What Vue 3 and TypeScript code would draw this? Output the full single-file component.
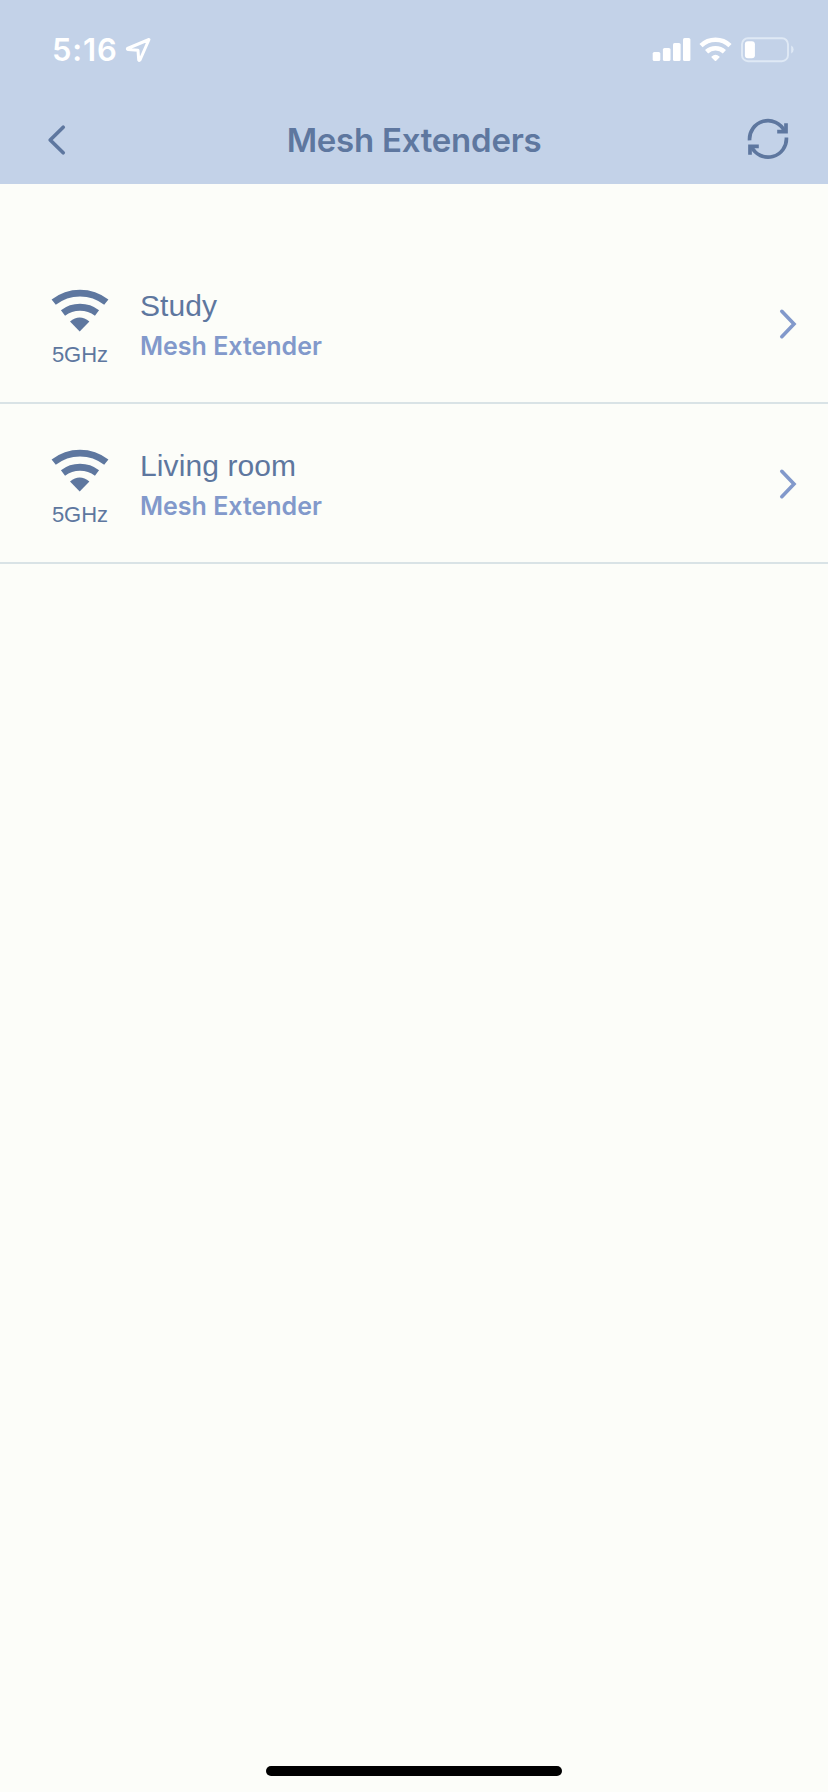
<script setup lang="ts">
interface Extender {
  name: string
  kind: string
  band: string
}

const extenders: Extender[] = [
  { name: 'Study', kind: 'Mesh Extender', band: '5GHz' },
  { name: 'Living room', kind: 'Mesh Extender', band: '5GHz' },
]
</script>

<template>
  <div class="screen">
    <header class="header">
      <div class="status">
        <span class="time">5:16</span>
        <svg class="location" width="28" height="28" viewBox="0 0 28 28">
          <path d="M25 3.5 L3.5 12.5 Q3 13.3 4 13.5 L14 14.3 L14.7 24 Q15.3 25 16 24 Z" />
        </svg>
        <div class="indicators">
          <svg width="144" height="28" viewBox="0 0 144 28">
            <g fill="#fff">
              <rect x="2.7" y="16" width="7.6" height="9" rx="1.6" />
              <rect x="12.9" y="12" width="7.6" height="13" rx="1.6" />
              <rect x="23" y="7" width="7.6" height="18" rx="1.6" />
              <rect x="33" y="2" width="7.4" height="23" rx="1.6" />
              <path d="M61.6 20.4 Q65.5 17.2 69.4 20.4 Q69.9 21 69.4 21.5 L66.2 24.7 Q65.5 25.3 64.8 24.7 L61.6 21.5 Q61.1 21 61.6 20.4 Z" />
            </g>
            <g fill="none" stroke="#fff" stroke-width="4.6">
              <path d="M51 9.6 A21 21 0 0 1 80 9.6" />
              <path d="M56.6 15.8 A13 13 0 0 1 74.4 15.8" />
            </g>
            <rect x="92" y="2.2" width="46" height="23" rx="6" fill="none" stroke="#dfe9f5" stroke-width="1.9" />
            <rect x="94.9" y="5.2" width="10" height="17" rx="3" fill="#fff" />
            <path d="M141.2 9.5 Q143.6 10.5 143.6 13.5 Q143.6 16.5 141.2 17.5 Z" fill="#dfe9f5" />
          </svg>
        </div>
      </div>
      <nav class="nav">
        <svg class="back" width="24" height="36" viewBox="0 0 24 36">
          <path d="M19.2 5.2 L6.2 18 L19.2 30.8" />
        </svg>
        <h1 class="title">Mesh Extenders</h1>
        <svg class="refresh" width="48" height="48" viewBox="0 0 48 48">
          <path d="M5.6 25.3 A18.4 18.4 0 0 1 40.5 16" />
          <path d="M42 8.3 V16.6 H33.2" />
          <path d="M42.4 22.5 A18.4 18.4 0 0 1 7.5 31.8" />
          <path d="M6 39.7 V31.3 H14.8" />
        </svg>
      </nav>
    </header>

    <main class="list">
      <section v-for="item in extenders" :key="item.name" class="row">
        <div class="signal">
          <svg width="60" height="44" viewBox="0 0 60 44">
            <g fill="none" stroke="#5e779f" stroke-width="6.8">
              <path d="M3.7 14.2 A42.5 42.5 0 0 1 56.3 14.2" />
              <path d="M13 25 A28 28 0 0 1 47 25" />
            </g>
            <path d="M20 33.4 Q29.6 25.6 39.4 33.4 L29.7 43.4 Z" fill="#5e779f" />
          </svg>
          <span class="band">{{ item.band }}</span>
        </div>
        <div class="info">
          <span class="name">{{ item.name }}</span>
          <span class="kind">{{ item.kind }}</span>
        </div>
        <svg class="chevron" width="20" height="34" viewBox="0 0 20 34">
          <path d="M3.8 4.3 L16 17 L3.8 29.7" />
        </svg>
      </section>
    </main>

    <footer class="footer"><div class="home"></div></footer>
  </div>
</template>

<style>
body {
  margin: 0;
  background: #fcfdf9;
}
</style>

<style scoped>
.screen {
  width: 828px;
  height: 1792px;
  display: flex;
  flex-direction: column;
  background: #fcfdf9;
  font-family: "Liberation Sans", Arial, sans-serif;
  color: #5e779f;
  overflow: hidden;
}
.header {
  height: 184px;
  flex: none;
  background: #c3d2e8;
}
.status {
  height: 96px;
  box-sizing: border-box;
  padding: 30px 34px 0 52px;
  display: flex;
  align-items: flex-start;
}
.time {
  width: 72px;
  font: 600 31px/40px Inter, sans-serif;
  letter-spacing: 0.8px;
  color: #fff;
}
.location {
  margin-top: 6px;
  fill: none;
  stroke: #fff;
  stroke-width: 3;
  stroke-linejoin: round;
}
.indicators {
  margin: 6px 0 0 auto;
  height: 28px;
}
.nav {
  height: 88px;
  box-sizing: border-box;
  padding: 0 36px 0 44px;
  display: grid;
  grid-template-columns: 40px 1fr 48px;
  align-items: center;
}
.back,
.refresh {
  fill: none;
  stroke: #5e779f;
  stroke-width: 3.7;
  stroke-linecap: round;
  stroke-linejoin: round;
}
.refresh {
  stroke-linecap: butt;
  stroke-linejoin: miter;
  margin-top: -2px;
}
.title {
  margin: 0;
  text-align: center;
  font: 600 33px/40px Inter, sans-serif;
  letter-spacing: -0.25px;
}
.list {
  padding-top: 60px;
  flex: 1;
}
.row {
  height: 160px;
  box-sizing: border-box;
  border-bottom: 2px solid #d9e3e6;
  padding: 44px 30px 0 50px;
  display: flex;
  align-items: flex-start;
}
.signal {
  width: 60px;
  display: flex;
  flex-direction: column;
  align-items: center;
}
.band {
  margin-top: 10px;
  font-size: 22px;
  line-height: 26px;
  white-space: nowrap;
}
.info {
  margin-left: 30px;
  flex: 1;
  display: flex;
  flex-direction: column;
}
.name {
  font-size: 30px;
  line-height: 36px;
  letter-spacing: 0.1px;
}
.kind {
  margin-top: 6px;
  font: 600 25px/32px Inter, sans-serif;
  color: #8299cb;
}
.chevron {
  margin-top: 19px;
  fill: none;
  stroke: #8299cb;
  stroke-width: 3.6;
  stroke-linecap: round;
  stroke-linejoin: miter;
}
.footer {
  height: 26px;
  display: flex;
  justify-content: center;
}
.home {
  width: 296px;
  height: 10px;
  border-radius: 5px;
  background: #000;
}
</style>
